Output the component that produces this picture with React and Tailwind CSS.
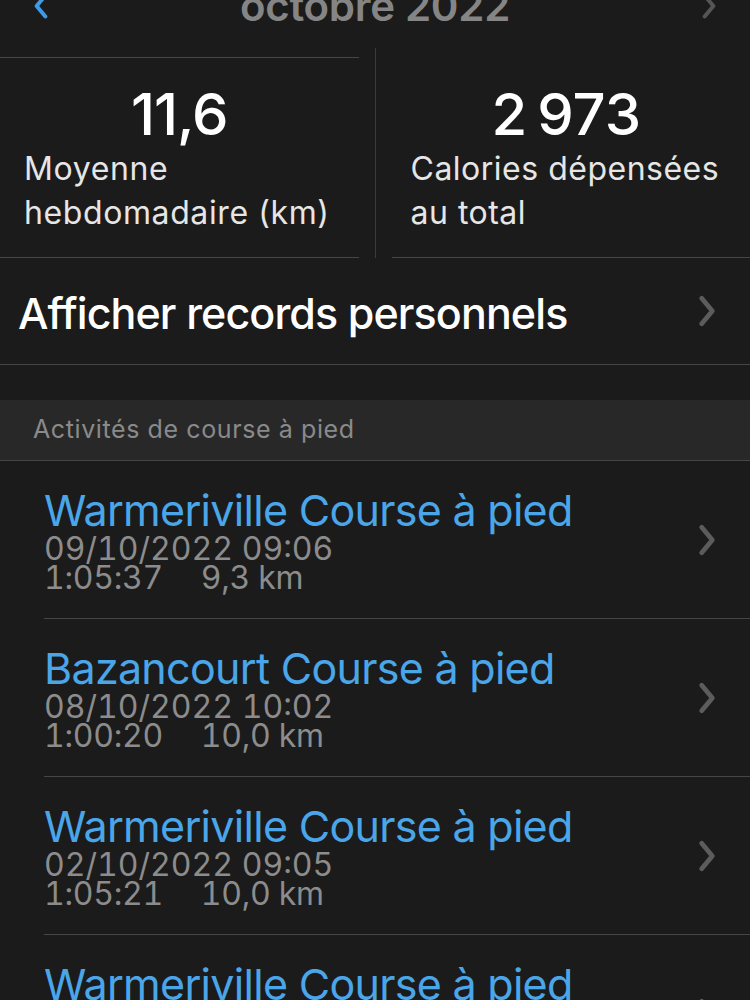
import React from 'react';

const activities = [
  { title: 'Warmeriville Course à pied', date: '09/10/2022 09:06', time: '1:05:37', dist: '9,3 km' },
  { title: 'Bazancourt Course à pied', date: '08/10/2022 10:02', time: '1:00:20', dist: '10,0 km' },
  { title: 'Warmeriville Course à pied', date: '02/10/2022 09:05', time: '1:05:21', dist: '10,0 km' },
  { title: 'Warmeriville Course à pied', date: '01/10/2022 09:12', time: '1:02:48', dist: '9,8 km' },
];

function Chevron({ left, className }) {
  return (
    <svg viewBox="0 0 20 32" className={className} fill="none" stroke="currentColor" strokeWidth="4.5" strokeLinecap="round" strokeLinejoin="round">
      {left ? <path d="M15 4 L5 16 L15 28" /> : <path d="M5 4 L15 16 L5 28" />}
    </svg>
  );
}

function ActivityRow({ item }) {
  return (
    <div className="flex h-[158px] items-center border-b border-[#464646] ml-[44px] pr-[32px]">
      <div className="flex-1">
        <div className="text-[43px] leading-[48px] text-[#4aa6e8] tracking-[-0.7px]">{item.title}</div>
        <div className="text-[32px] leading-[29px] text-[#8c8c8c] tabular-nums">{item.date}</div>
        <div className="text-[32px] leading-[30px] text-[#8c8c8c] tabular-nums tracking-[-0.3px]">
          {item.time}
          <span className="ml-[38px]">{item.dist}</span>
        </div>
      </div>
      <Chevron className="w-[22px] h-[34px] text-[#5c5c5c]" />
    </div>
  );
}

export default function App() {
  return (
    <div className="w-[750px] h-[1000px] overflow-hidden bg-[#1b1b1b] text-white" style={{ fontFamily: 'Inter, Roboto, "Liberation Sans", sans-serif' }}>
      {/* month header */}
      <div className="relative h-[48px]">
        <div className="absolute left-0 right-0 -top-[19px] flex items-center justify-between px-[32px]">
          <Chevron left className="w-[18px] h-[28px] text-[#3d9ae6]" />
          <div className="text-[42px] font-semibold text-[#858585] leading-[50px] tracking-[-0.3px]">octobre 2022</div>
          <Chevron className="w-[18px] h-[28px] text-[#555555]" />
        </div>
      </div>

      {/* stats */}
      <div className="flex h-[210px]">
        <div className="flex-1 flex flex-col">
          <div className="h-[10px] border-b border-[#464646] mr-[16px]" />
          <div className="flex-1 pl-[24px] pt-[24px]">
            <div className="text-center text-[58px] font-medium leading-[64px] pr-[40px] tracking-[-1px]">11,6</div>
            <div className="text-[32px] leading-[44px] text-[#e6e6e6] tracking-[0.6px] pt-[1px]">Moyenne<br />hebdomadaire (km)</div>
          </div>
          <div className="border-b border-[#464646] mr-[16px]" />
        </div>
        <div className="w-px bg-[#3c3c3c]" />
        <div className="flex-1 flex flex-col">
          <div className="h-[10px]" />
          <div className="flex-1 pl-[35px] pt-[24px]">
            <div className="text-center text-[58px] font-medium leading-[64px] pr-[28px] tracking-[-1px]">2{'\u202F'}973</div>
            <div className="text-[32px] leading-[44px] text-[#e6e6e6] tracking-[0.5px] pt-[1px] whitespace-nowrap">Calories dépensées<br />au total</div>
          </div>
          <div className="border-b border-[#464646] ml-[16px]" />
        </div>
      </div>

      {/* records */}
      <div className="flex h-[107px] items-center justify-between pl-[18px] pr-[32px] border-b border-[#464646]">
        <div className="text-[43px] font-medium tracking-[-0.9px] pt-[4px]">Afficher records personnels</div>
        <Chevron className="w-[22px] h-[34px] text-[#5c5c5c]" />
      </div>

      <div className="h-[35px]" />

      {/* section header */}
      <div className="h-[61px] bg-[#282828] border-b border-[#464646] flex items-center pl-[33px]">
        <div className="text-[25px] text-[#8a8a8a] tracking-[0.6px]">Activités de course à pied</div>
      </div>

      {activities.map((item, i) => (
        <ActivityRow key={i} item={item} />
      ))}
    </div>
  );
}
